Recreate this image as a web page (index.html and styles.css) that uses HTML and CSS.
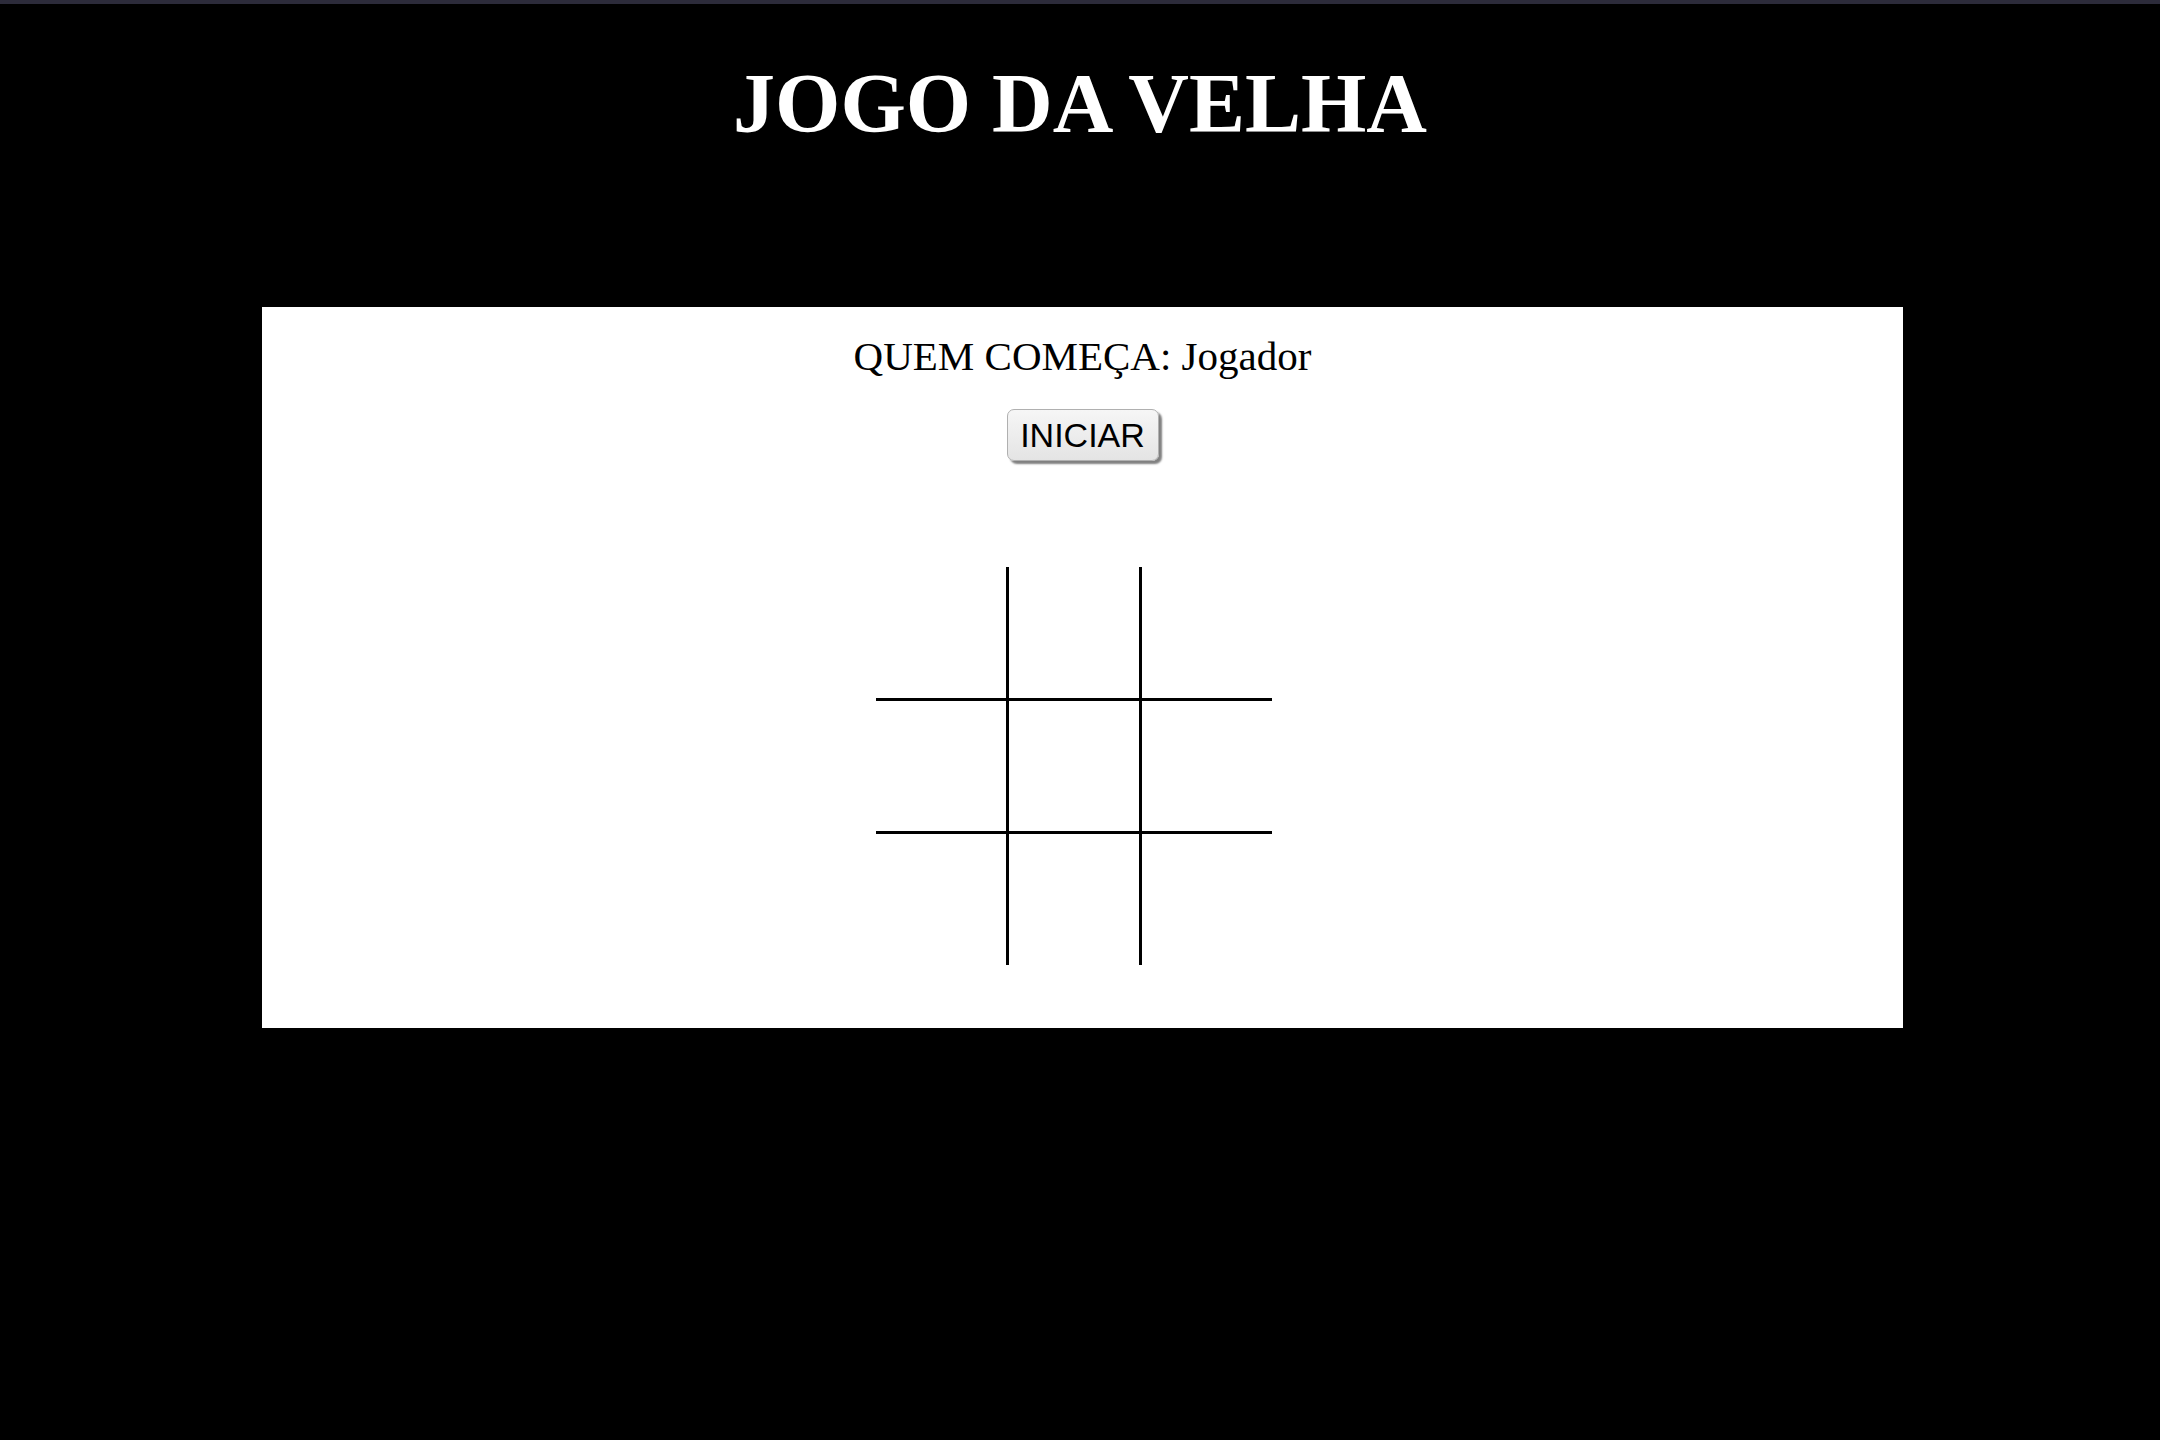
FILE: index.html
```html
<!DOCTYPE html>
<html lang="pt">
<head>
<meta charset="utf-8">
<title>Jogo da Velha</title>
<link rel="stylesheet" href="styles.css">
</head>
<body>
<div class="topbar"></div>
<h1 class="title">JOGO DA VELHA</h1>
<main class="panel">
  <p class="starter">QUEM COMEÇA: Jogador</p>
  <div class="actions"><button class="start-btn" type="button">INICIAR</button></div>
  <div class="board">
    <div class="cell"></div>
    <div class="cell col-mid"></div>
    <div class="cell"></div>
    <div class="cell row-mid"></div>
    <div class="cell row-mid col-mid"></div>
    <div class="cell row-mid"></div>
    <div class="cell"></div>
    <div class="cell col-mid"></div>
    <div class="cell"></div>
  </div>
</main>
</body>
</html>
```
FILE: styles.css
```css
html, body {
  margin: 0;
  padding: 0;
  background: #000;
}
body {
  min-height: 1440px;
  font-family: "Liberation Serif", "Times New Roman", serif;
}
.topbar {
  height: 4px;
  background: #2c2b3a;
}
.title {
  margin: 52px 0 0;
  color: #fff;
  font-size: 84px;
  line-height: 96px;
  font-weight: bold;
  text-align: center;
}
.panel {
  margin: 155px 257px 0 262px;
  background: #fff;
  padding: 28px 0 63px;
}
.starter {
  margin: 0;
  font-size: 41px;
  line-height: 42px;
  text-align: center;
  color: #000;
}
.actions {
  display: flex;
  justify-content: center;
  margin-top: 32px;
}
.start-btn {
  width: 152px;
  height: 52px;
  padding: 0;
  font-family: "Liberation Sans", Arial, sans-serif;
  font-size: 34px;
  color: #000;
  background: linear-gradient(#f6f6f6, #e4e4e4);
  border: 1px solid #b0b0b0;
  border-radius: 7px;
  box-shadow: 3px 3px 2px #808080;
}
.board {
  display: grid;
  grid-template-columns: 130px 136px 130px;
  grid-template-rows: 131px 136px 131px;
  width: 396px;
  margin: 106px 0 0 614px;
}
.cell {
  box-sizing: border-box;
}
.col-mid {
  border-left: 3px solid #000;
  border-right: 3px solid #000;
}
.row-mid {
  border-top: 3px solid #000;
  border-bottom: 3px solid #000;
}
```
